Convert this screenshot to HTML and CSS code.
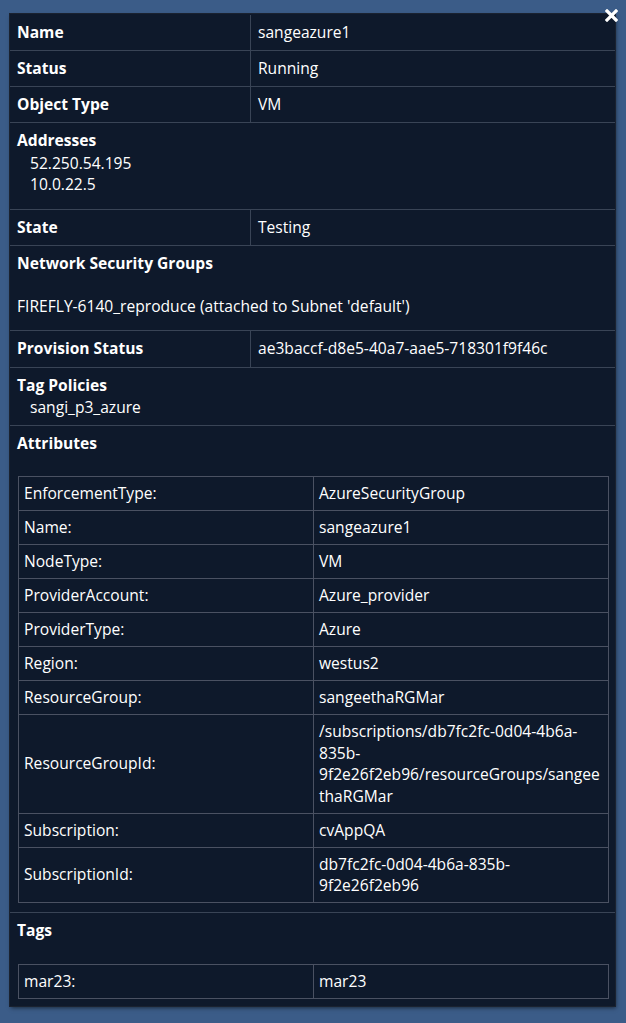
FILE: index.html
```html
<!DOCTYPE html>
<html>
<head>
<meta charset="utf-8">
<link rel="stylesheet" href="styles.css">
</head>
<body>
<div class="panel">
  <button class="close" aria-label="Close">
    <svg width="13" height="13" viewBox="0 0 13 13"><path d="M2 2 L11 11 M11 2 L2 11" stroke="#fff" stroke-width="3.2" stroke-linecap="square"/></svg>
  </button>
  <div class="row pair"><div class="k">Name</div><div class="v">sangeazure1</div></div>
  <div class="row pair"><div class="k">Status</div><div class="v">Running</div></div>
  <div class="row pair"><div class="k">Object Type</div><div class="v">VM</div></div>
  <div class="row block">
    <div class="k">Addresses</div>
    <div class="list addr"><div>52.250.54.195</div><div>10.0.22.5</div></div>
  </div>
  <div class="row pair"><div class="k">State</div><div class="v">Testing</div></div>
  <div class="row block">
    <div class="k">Network Security Groups</div>
    <div class="nsg">FIREFLY-6140_reproduce (attached to Subnet 'default')</div>
  </div>
  <div class="row pair tall"><div class="k">Provision Status</div><div class="v">ae3baccf-d8e5-40a7-aae5-718301f9f46c</div></div>
  <div class="row block tags">
    <div class="k">Tag Policies</div>
    <div class="list"><div>sangi_p3_azure</div></div>
  </div>
  <div class="row block attr-block">
    <div class="k">Attributes</div>
    <table class="attrs">
      <tr><td>EnforcementType:</td><td>AzureSecurityGroup</td></tr>
      <tr><td>Name:</td><td>sangeazure1</td></tr>
      <tr><td>NodeType:</td><td>VM</td></tr>
      <tr><td>ProviderAccount:</td><td>Azure_provider</td></tr>
      <tr><td>ProviderType:</td><td>Azure</td></tr>
      <tr><td>Region:</td><td>westus2</td></tr>
      <tr><td>ResourceGroup:</td><td>sangeethaRGMar</td></tr>
      <tr><td>ResourceGroupId:</td><td>/subscriptions/db7fc2fc-0d04-4b6a-835b-9f2e26f2eb96/resourceGroups/sangeethaRGMar</td></tr>
      <tr><td>Subscription:</td><td>cvAppQA</td></tr>
      <tr><td>SubscriptionId:</td><td>db7fc2fc-0d04-4b6a-835b-9f2e26f2eb96</td></tr>
    </table>
  </div>
  <div class="row block last">
    <div class="k">Tags</div>
    <table class="attrs">
      <tr><td>mar23:</td><td>mar23</td></tr>
    </table>
  </div>
</div>
</body>
</html>
```
FILE: styles.css
```css
html, body {
  margin: 0;
  padding: 0;
}
body {
  background: #3b5c88;
  font-family: "Open Sans", "DejaVu Sans", sans-serif;
  font-size: 15.6px;
  line-height: 21.5px;
  color: #ffffff;
  padding: 14px 0 0 10px;
  height: 1023px;
  box-sizing: border-box;
}
.panel {
  position: relative;
  width: 605px;
  padding-top: 1px;
  background: #0e192b;
  box-shadow: 0 0 0 1px #1a2230, 1px 2px 4px rgba(0, 0, 0, 0.55);
}
.close {
  position: absolute;
  top: -6px;
  right: -4px;
  width: 15px;
  height: 15px;
  padding: 1px;
  margin: 0;
  border: 0;
  background: transparent;
  display: flex;
  align-items: center;
  justify-content: center;
}
.row {
  border-bottom: 1px solid #394456;
}
.row.last {
  border-bottom: 0;
}
.pair {
  display: grid;
  grid-template-columns: 241px 1fr;
}
.pair .k {
  border-right: 1px solid #394456;
}
.pair .k, .pair .v {
  padding: 7px 7px 6.5px;
}
.pair.tall .k, .pair.tall .v {
  padding-bottom: 7.5px;
}
.k {
  font-weight: 700;
}
.block {
  padding: 7px 7px 7.5px;
}
.block.tags {
  padding-bottom: 6.5px;
}
.block.attr-block {
  padding-bottom: 9px;
}
.list {
  padding-left: 13px;
}
.list.addr {
  margin-top: 1px;
  margin-bottom: 6px;
}
.nsg {
  margin-top: 21.5px;
  margin-bottom: 5px;
}
.attrs {
  margin-top: 22px;
  width: 591px;
  margin-left: 1px;
  border-collapse: collapse;
  table-layout: fixed;
}
.attrs td {
  width: 50%;
  border: 1px solid #4a5162;
  padding: 6px 5px 5.5px;
  vertical-align: middle;
  overflow-wrap: anywhere;
}
```
